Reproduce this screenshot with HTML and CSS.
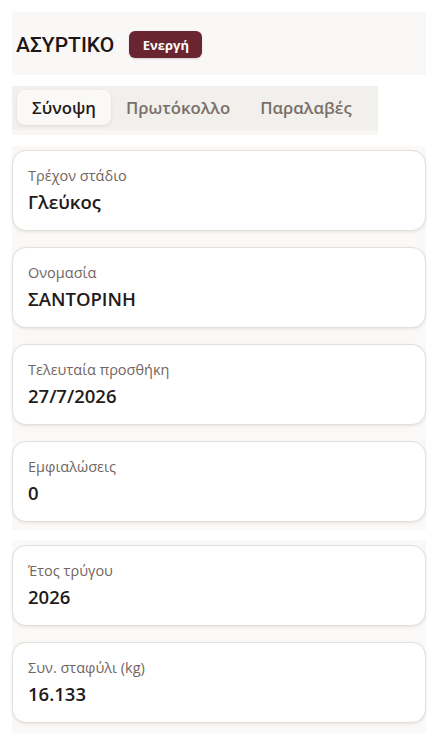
FILE: index.html
```html
<!DOCTYPE html>
<html lang="el">
<head>
<meta charset="utf-8">
<title>ΑΣΥΡΤΙΚΟ</title>
<link rel="stylesheet" href="styles.css">
</head>
<body>
<div class="page">
  <header class="header">
    <h1 class="title">ΑΣΥΡΤΙΚΟ</h1>
    <span class="badge">Ενεργή</span>
  </header>
  <nav class="tabs">
    <span class="tab active">Σύνοψη</span>
    <span class="tab">Πρωτόκολλο</span>
    <span class="tab">Παραλαβές</span>
  </nav>
  <section class="group">
    <div class="card"><div class="label">Τρέχον στάδιο</div><div class="value">Γλεύκος</div></div>
    <div class="card"><div class="label">Ονομασία</div><div class="value">ΣΑΝΤΟΡΙΝΗ</div></div>
    <div class="card"><div class="label">Τελευταία προσθήκη</div><div class="value">27/7/2026</div></div>
    <div class="card"><div class="label">Εμφιαλώσεις</div><div class="value">0</div></div>
  </section>
  <section class="group">
    <div class="card"><div class="label">Έτος τρύγου</div><div class="value">2026</div></div>
    <div class="card"><div class="label">Συν. σταφύλι (kg)</div><div class="value">16.133</div></div>
  </section>
</div>
</body>
</html>
```
FILE: styles.css
```css
* { box-sizing: border-box; }
html, body { margin: 0; padding: 0; background: #ffffff; }
body {
  font-family: "Open Sans", "Noto Sans", sans-serif;
  color: #241a1a;
}
.page {
  padding: 12px 12px 0 12px;
  display: flex;
  flex-direction: column;
}
.header {
  height: 63px;
  background: #f9f8f6;
  display: flex;
  align-items: center;
  gap: 15px;
  padding: 2px 4px 0 4px;
}
.title {
  margin: 0;
  font-family: Roboto, "Open Sans", sans-serif;
  font-size: 21px;
  font-weight: 500;
  color: #1f1616;
  letter-spacing: 0;
}
.badge {
  background: #6a2630;
  color: #ffffff;
  font-size: 13px;
  font-weight: 700;
  height: 27px;
  padding: 0 13.5px;
  display: inline-flex;
  align-items: center;
  border-radius: 6px;
  box-shadow: 0 1px 2px rgba(0,0,0,0.15);
}
.tabs {
  margin-top: 11px;
  align-self: flex-start;
  width: 366px;
  display: flex;
  background: #f1f0ec;
  padding: 4px 5px 5px 5px;
  border-bottom: 5px solid #f8f7f4;
}
.tab {
  height: 35px;
  display: flex;
  align-items: center;
  padding: 0 15px;
  font-size: 16.75px;
  font-weight: 600;
  color: #7a6f69;
  border-radius: 8px;
}
.tab.active {
  background: #faf9f7;
  color: #231a1a;
  box-shadow: 0 1px 3px rgba(0,0,0,0.10);
}
.group {
  margin-top: 11px;
  background: #faf9f7;
  padding: 4px 0 8px 0;
  display: flex;
  flex-direction: column;
  gap: 16px;
}
.group + .group { margin-top: 10px; padding-top: 5px; padding-bottom: 10px; }
.card {
  background: #ffffff;
  border: 1px solid #e4dfd9;
  border-radius: 14px;
  box-shadow: 0 1px 3px rgba(60,40,30,0.10);
  padding: 15px 15px 15px 15px;
  height: 81px;
}
.label {
  font-size: 14.5px;
  line-height: 20px;
  color: #72665f;
}
.value {
  margin-top: 3px;
  font-size: 18.5px;
  line-height: 25px;
  font-weight: 600;
  color: #231a1a;
}
```
